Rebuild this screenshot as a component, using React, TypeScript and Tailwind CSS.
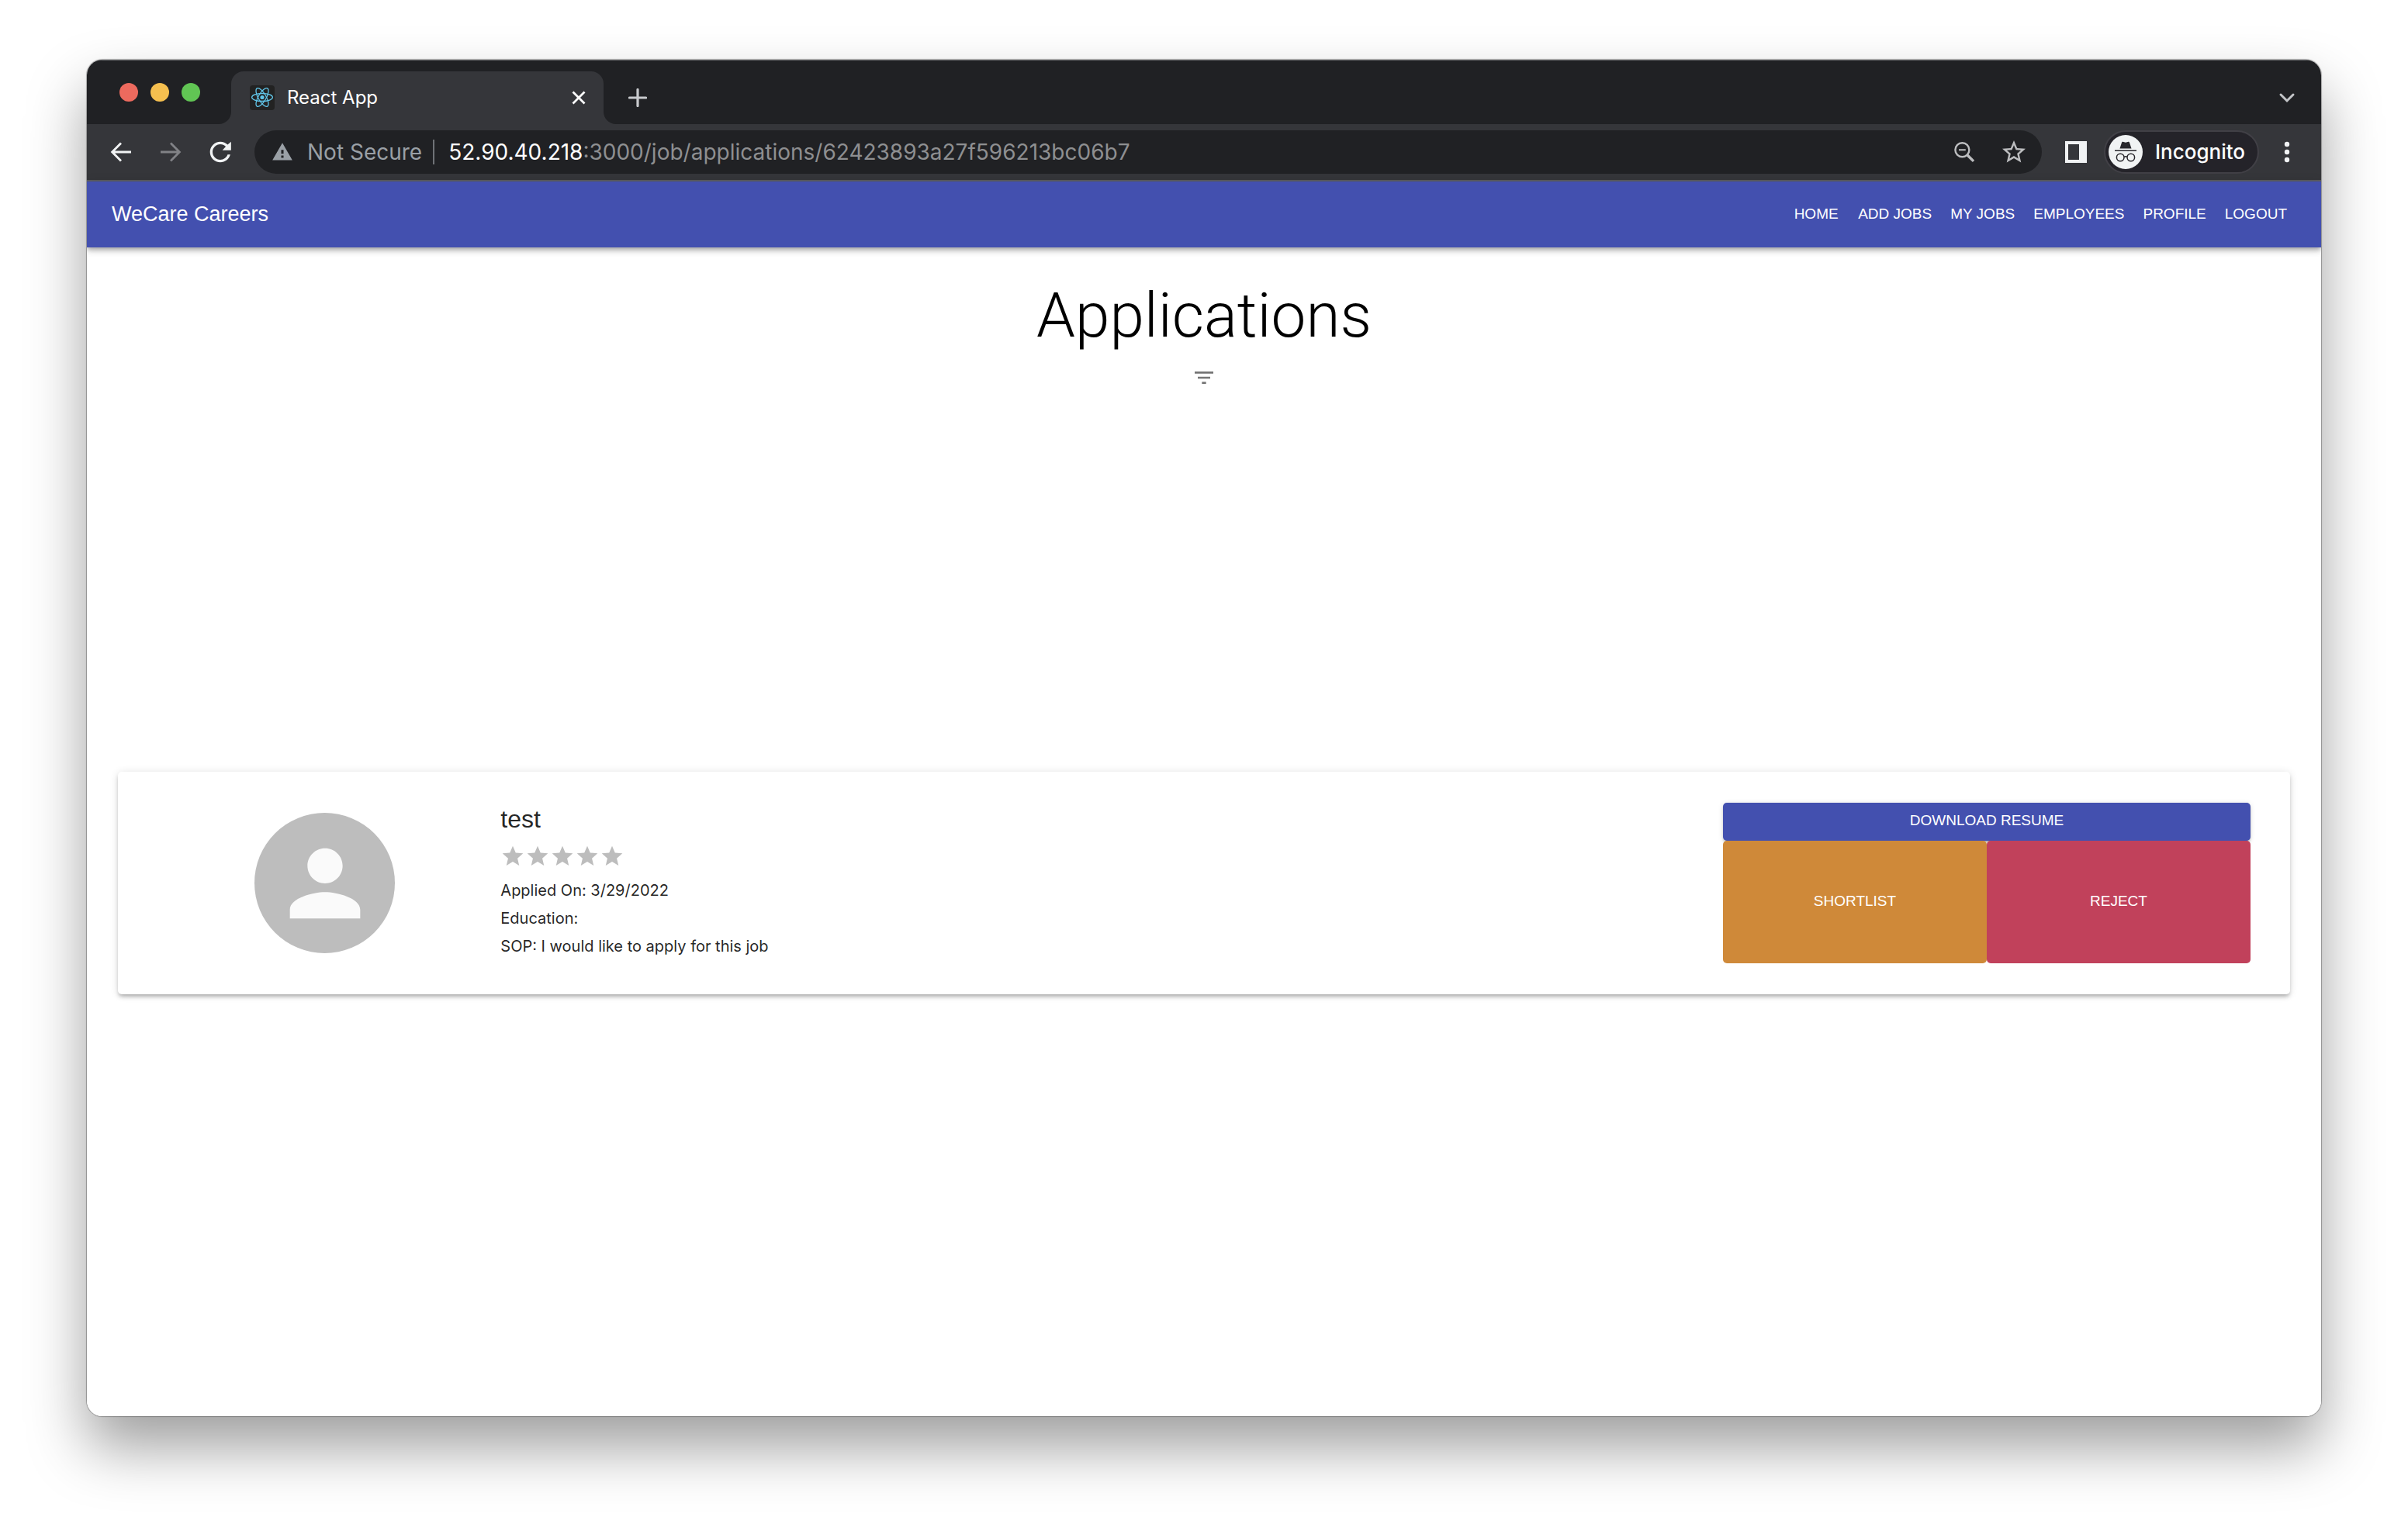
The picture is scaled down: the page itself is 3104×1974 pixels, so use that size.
import type { ReactNode } from 'react';

const NAV_ITEMS = ['Home', 'Add Jobs', 'My Jobs', 'Employees', 'Profile', 'Logout'];

const PERSON_PATH =
  'M12 12c2.21 0 4-1.79 4-4s-1.79-4-4-4-4 1.79-4 4 1.79 4 4 4zm0 2c-2.67 0-8 1.34-8 4v2h16v-2c0-2.66-5.33-4-8-4z';
const STAR_PATH = 'M12 17.27L18.18 21l-1.64-7.03L22 9.24l-7.19-.61L12 2 9.19 8.63 2 9.24l5.46 4.73L5.82 21z';
const STAR_OUTLINE_PATH =
  'M22 9.24l-7.19-.62L12 2 9.19 8.63 2 9.24l5.46 4.73L5.82 21 12 17.27 18.18 21l-1.63-7.03L22 9.24zM12 15.4l-3.76 2.27 1-4.28-3.32-2.88 4.38-.38L12 6.1l1.71 4.04 4.38.38-3.32 2.88 1 4.28L12 15.4z';
const RELOAD_PATH =
  'M17.65 6.35C16.2 4.9 14.21 4 12 4c-4.42 0-7.99 3.58-7.99 8s3.57 8 7.99 8c3.73 0 6.84-2.55 7.73-6h-2.08c-.82 2.33-3.04 4-5.65 4-3.31 0-6-2.69-6-6s2.69-6 6-6c1.66 0 3.14.69 4.22 1.78L13.6 10.6H20.3V4z';
const WARNING_PATH = 'M1 21h22L12 2 1 21zm12.3-2.6h-2.6v-2.6h2.6v2.6zm0-4.4h-2.6V9.6h2.6V14z';

function ReactLogo() {
  return (
    <svg viewBox="0 0 32 32" className="size-8 shrink-0" aria-hidden="true">
      <rect width="32" height="32" rx="4" fill="#222222" />
      <g fill="none" stroke="#61c5e8" strokeWidth="1.3">
        <ellipse cx="16" cy="15.5" rx="13.4" ry="5" />
        <ellipse cx="16" cy="15.5" rx="13.4" ry="5" transform="rotate(60 16 15.5)" />
        <ellipse cx="16" cy="15.5" rx="13.4" ry="5" transform="rotate(120 16 15.5)" />
      </g>
      <circle cx="16" cy="15.5" r="2.6" fill="#61c5e8" />
    </svg>
  );
}

function IncognitoBadge() {
  return (
    <svg viewBox="0 0 44 44" className="size-11 shrink-0" aria-hidden="true">
      <circle cx="22" cy="22" r="22" fill="#f1f3f4" />
      <path d="M14.5 17.5l2.6-8.1c.2-.6.8-.9 1.4-.7l3.5 1 3.5-1c.6-.2 1.2.1 1.4.7l2.6 8.1z" fill="#28272c" />
      <path d="M8 20.2h28" stroke="#28272c" strokeWidth="1.6" />
      <g fill="none" stroke="#28272c" strokeWidth="1.5">
        <circle cx="15.2" cy="29" r="4.8" />
        <circle cx="28.8" cy="29" r="4.8" />
        <path d="M20 28.4c1.2-.9 2.8-.9 4 0" />
      </g>
    </svg>
  );
}

function ToolButton({ label, className, children }: { label: string; className: string; children: ReactNode }) {
  return (
    <button type="button" aria-label={label} className={`flex h-14 shrink-0 items-center justify-center ${className}`}>
      {children}
    </button>
  );
}

function TabStrip() {
  return (
    <div className="flex h-[83px] items-center border-t border-[#6b6c6f] bg-[#202124] pl-[42px]">
      <div className="flex gap-4">
        <button type="button" aria-label="Close window" className="size-6 rounded-full bg-[#ed6a5e]" />
        <button type="button" aria-label="Minimize window" className="size-6 rounded-full bg-[#f5bf4f]" />
        <button type="button" aria-label="Zoom window" className="size-6 rounded-full bg-[#61c554]" />
      </div>
      <svg viewBox="0 0 16 16" className="ml-6 size-4 self-end" aria-hidden="true">
        <path d="M16 0v16H0A16 16 0 0 0 16 0z" fill="#35363a" />
      </svg>
      <div className="flex h-[68px] w-[480px] items-center self-end rounded-t-2xl bg-[#35363a] pr-5 pl-6">
        <ReactLogo />
        <span className="ml-4 flex-1 text-2xl text-white">React App</span>
        <button type="button" aria-label="Close tab" className="flex size-6 items-center justify-center">
          <svg viewBox="0 0 18 18" className="size-[18px]" aria-hidden="true">
            <path d="M1.5 1.5l15 15M16.5 1.5l-15 15" stroke="#ffffff" strokeWidth="2.8" />
          </svg>
        </button>
      </div>
      <svg viewBox="0 0 16 16" className="size-4 self-end" aria-hidden="true">
        <path d="M0 0v16h16A16 16 0 0 1 0 0z" fill="#35363a" />
      </svg>
      <button type="button" aria-label="New tab" className="ml-4 flex h-[68px] w-6 items-center self-end">
        <svg viewBox="0 0 24 24" className="size-6" aria-hidden="true">
          <path d="M12 1.5v21M1.5 12h21" stroke="#c8cacd" strokeWidth="3.2" strokeLinecap="round" />
        </svg>
      </button>
      <button type="button" aria-label="Search tabs" className="mr-8 ml-auto flex h-[68px] w-6 items-center self-end">
        <svg viewBox="0 0 24 24" className="size-6" aria-hidden="true">
          <path d="M4 8l8 8 8-8" fill="none" stroke="#c3c5c8" strokeWidth="3" strokeLinecap="round" />
        </svg>
      </button>
    </div>
  );
}

function AddressBar() {
  return (
    <div className="ml-3 flex h-14 min-w-0 flex-1 items-center rounded-full bg-[#202124] pr-1 pl-[22px] text-[28px] leading-none">
      <svg viewBox="0 0 24 24" className="size-7 shrink-0" aria-hidden="true">
        <path d={WARNING_PATH} fill="#9aa0a6" fillRule="evenodd" />
      </svg>
      <span className="ml-[18px] whitespace-nowrap text-[#9aa0a6]">Not Secure</span>
      <span className="ml-[14px] h-8 w-0.5 shrink-0 bg-[#6f7276]" />
      <span className="ml-[18px] min-w-0 flex-1 truncate leading-9 text-[#8e8f91]">
        <span className="text-white">52.90.40.218</span>
        :3000/job/applications/62423893a27f596213bc06b7
      </span>
      <ToolButton label="Page zoom" className="w-16">
        <svg viewBox="0 0 28 28" className="size-7" fill="none" stroke="#bdbec0" aria-hidden="true">
          <circle cx="11.4" cy="11.3" r="9" strokeWidth="2.4" />
          <path d="M7 11.3h8.8" strokeWidth="2" />
          <path d="M17.8 17.7l8.2 8.2" strokeWidth="3.4" />
        </svg>
      </ToolButton>
      <ToolButton label="Bookmark this page" className="w-16">
        <svg viewBox="0 0 24 24" className="size-9" aria-hidden="true">
          <path d={STAR_OUTLINE_PATH} fill="#bdbec0" />
        </svg>
      </ToolButton>
    </div>
  );
}

function Toolbar() {
  return (
    <div className="flex h-[74px] items-center border-b-2 border-[#5c5d61] bg-[#35363a] pr-2 pl-3">
      <ToolButton label="Back" className="w-16">
        <svg viewBox="0 0 28 28" className="size-7" fill="none" stroke="#f1f3f4" strokeWidth="2.8" aria-hidden="true">
          <path d="M27 14H3M14 2.4L2.6 14 14 25.6" />
        </svg>
      </ToolButton>
      <ToolButton label="Forward" className="w-16">
        <svg viewBox="0 0 28 28" className="size-7" fill="none" stroke="#818286" strokeWidth="2.8" aria-hidden="true">
          <path d="M1 14h24M14 2.4L25.4 14 14 25.6" />
        </svg>
      </ToolButton>
      <ToolButton label="Reload" className="w-16">
        <svg viewBox="0 0 24 24" className="size-10" aria-hidden="true">
          <path d={RELOAD_PATH} fill="#f1f3f4" />
        </svg>
      </ToolButton>
      <AddressBar />
      <ToolButton label="Side panel" className="ml-5 w-12">
        <svg viewBox="0 0 28 28" className="size-7" aria-hidden="true">
          <path d="M0 0h28v28H0zM4 4v20h14V4z" fill="#f1f3f4" fillRule="evenodd" />
        </svg>
      </ToolButton>
      <button
        type="button"
        className="ml-3 flex h-14 w-[200px] shrink-0 items-center gap-4 rounded-full border-2 border-[#414046] bg-[#242329] pl-1 text-[26px] leading-none font-medium text-white"
      >
        <IncognitoBadge />
        Incognito
      </button>
      <ToolButton label="Menu" className="w-[72px]">
        <svg viewBox="0 0 8 28" className="h-7 w-2" fill="#f1f3f4" aria-hidden="true">
          <circle cx="4" cy="4" r="3.2" />
          <circle cx="4" cy="14" r="3.2" />
          <circle cx="4" cy="24" r="3.2" />
        </svg>
      </ToolButton>
    </div>
  );
}

function SiteHeader() {
  return (
    <header className="z-10 flex h-[85px] items-center justify-between bg-[#4350af] px-8 pb-0.5 font-['Liberation_Sans',sans-serif] text-white shadow-[0_3px_5px_-1px_rgba(0,0,0,0.2),0_5px_7px_0_rgba(0,0,0,0.14),0_1px_13px_0_rgba(0,0,0,0.12)]">
      <h6 className="text-[27px] leading-10">WeCare Careers</h6>
      <nav className="flex">
        {NAV_ITEMS.map((item) => (
          <button key={item} type="button" className="min-w-[84px] px-3 text-[19px] leading-8 uppercase">
            {item}
          </button>
        ))}
      </nav>
    </header>
  );
}

function ApplicationCard() {
  return (
    <article className="mx-10 grid grid-cols-[2fr_7fr_3fr] rounded-[5px] bg-white py-10 pr-[51px] pl-[29px] text-black/87 shadow-[0_4px_4px_-3px_rgba(0,0,0,0.2),0_4px_5px_0_rgba(0,0,0,0.14),0_1px_11px_0_rgba(0,0,0,0.12)]">
      <div className="flex items-center justify-center pl-[22px]">
        <div className="flex size-[181px] items-center justify-center overflow-hidden rounded-full bg-[#bdbdbd]">
          <svg viewBox="0 0 24 24" className="size-[136px]" role="img" aria-label="Applicant photo">
            <path d={PERSON_PATH} fill="#fafafa" />
          </svg>
        </div>
      </div>
      <div className="pl-[11px] text-xl leading-9">
        <h5 className="font-['Liberation_Sans',sans-serif] text-[32px] leading-[43px]">test</h5>
        <div className="flex h-[52px] items-center" role="img" aria-label="0 of 5 stars">
          {[1, 2, 3, 4, 5].map((n) => (
            <svg key={n} viewBox="0 0 24 24" className="size-8" fill="#bdbdbd" aria-hidden="true">
              <path d={STAR_PATH} />
            </svg>
          ))}
        </div>
        <p>Applied On: 3/29/2022</p>
        <p>Education:</p>
        <p>SOP: I would like to apply for this job</p>
      </div>
      <div className="flex flex-col font-['Liberation_Sans',sans-serif] text-[19px] text-white">
        <button
          type="button"
          className="h-[49px] rounded-[5px] bg-[#4350af] pb-0.5 shadow-[0_4px_1px_-3px_rgba(0,0,0,0.2),0_3px_3px_0_rgba(0,0,0,0.14),0_1px_7px_0_rgba(0,0,0,0.12)]"
        >
          DOWNLOAD RESUME
        </button>
        <div className="z-10 grid h-[158px] grid-cols-2">
          <button type="button" className="rounded-[5px] bg-[#cf8939] pb-0.5">
            SHORTLIST
          </button>
          <button type="button" className="rounded-[5px] bg-[#c1415b] pb-0.5">
            REJECT
          </button>
        </div>
      </div>
    </article>
  );
}

export default function App() {
  return (
    <div className="flex min-h-screen flex-col bg-white px-28 pt-[77px] pb-[148px] font-['Inter',sans-serif]">
      <div className="flex flex-1 flex-col rounded-[20px] shadow-[0_0_1px_1px_rgba(0,0,0,0.3),0_40px_76px_0_rgba(0,0,0,0.38)]">
        <div className="flex flex-1 flex-col overflow-hidden rounded-[20px] bg-white">
          <TabStrip />
          <Toolbar />
          <SiteHeader />
          <main className="flex flex-1 flex-col">
            <div className="flex flex-col items-center pt-10">
              <h2 className="font-['Roboto',sans-serif] text-[80px] leading-[96px] font-light text-black">
                Applications
              </h2>
              <button type="button" aria-label="Filter applications" className="p-4">
                <svg viewBox="0 0 24 24" className="size-8" fill="#757575" aria-hidden="true">
                  <path d="M10 18h4v-2h-4v2zM3 6v2h18V6H3zm3 7h12v-2H6v2z" />
                </svg>
              </button>
            </div>
            <div className="flex flex-1 flex-col justify-center pb-[68px]">
              <ApplicationCard />
            </div>
          </main>
        </div>
      </div>
    </div>
  );
}
